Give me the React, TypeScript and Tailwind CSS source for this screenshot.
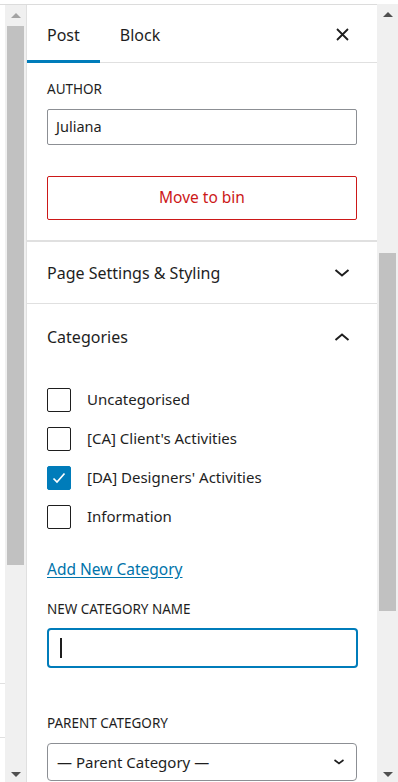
import React from "react";

const font = { fontFamily: '"Noto Sans", "Open Sans", sans-serif' };

function ChevronDown() {
  return (
    <svg width="16" height="10" viewBox="0 0 16 10" className="block">
      <polyline points="1.5,2 8,7.5 14.5,2" fill="none" stroke="#1e1e1e" strokeWidth="2" />
    </svg>
  );
}
function ChevronUp() {
  return (
    <svg width="16" height="10" viewBox="0 0 16 10" className="block">
      <polyline points="1.5,8 8,2.5 14.5,8" fill="none" stroke="#1e1e1e" strokeWidth="2" />
    </svg>
  );
}

function Checkbox({ checked, label }: { checked?: boolean; label: string }) {
  return (
    <div className="flex items-center h-[39px] gap-4">
      <div
        className={
          checked
            ? "w-6 h-6 rounded-[2px] bg-[#007cba] border border-[#007cba] flex items-center justify-center"
            : "w-6 h-6 rounded-[2px] border border-[#1e1e1e] bg-white"
        }
      >
        {checked && (
          <svg width="18" height="18" viewBox="0 0 18 18">
            <polyline points="3.5,9.5 7,13 14.5,4.5" fill="none" stroke="#fff" strokeWidth="1.7" />
          </svg>
        )}
      </div>
      <span className="text-[15px] text-[#1e1e1e]">{label}</span>
    </div>
  );
}

export default function App() {
  return (
    <div className="w-[398px] h-[782px] bg-white flex overflow-hidden" style={font}>
      <div className="flex-1 flex flex-col pt-[4px]">
        <div className="flex-1 flex border-t border-[#dcdcdc] min-h-0">
          {/* left strip */}
          <div className="w-[5px] flex flex-col">
            <div className="h-[678px]" />
            <div className="h-[55px] border-t border-b border-[#e0e0e0]" />
          </div>
          <div className="w-[21px] bg-[#f0f0f0] flex flex-col items-center relative">
            <div className="h-[21px] flex items-center justify-center">
              <div className="w-0 h-0 border-l-[5px] border-r-[5px] border-b-[5px] border-l-transparent border-r-transparent border-b-[#a3a3a3]" />
            </div>
            <div className="w-[17px] h-[539px] bg-[#c1c1c1]" />
            <div className="flex-1" />
            <div className="h-[16px] flex items-center justify-center">
              <div className="w-0 h-0 border-l-[5px] border-r-[5px] border-t-[5px] border-l-transparent border-r-transparent border-t-[#505050]" />
            </div>
          </div>
          {/* panel */}
          <div className="w-[351px] border-l border-[#e0e0e0] flex flex-col text-[#1e1e1e]">
            <div className="h-[58px] flex border-b border-[#e0e0e0] items-stretch">
              <div className="px-5 flex items-center text-[16px] border-b-[3px] border-[#007cba] pt-[5px] -mb-px">Post</div>
              <div className="px-5 flex items-center text-[16px] pt-[2px]">Block</div>
              <div className="flex-1" />
              <div className="w-[58px] flex items-center justify-center pr-[12px] pt-[2px]">
                <svg width="13" height="13" viewBox="0 0 13 13">
                  <path d="M1 1L12 12M12 1L1 12" stroke="#1e1e1e" strokeWidth="1.8" />
                </svg>
              </div>
            </div>
            <div className="px-5 pt-[16px] pb-[20px] border-b-2 border-[#e0e0e0]">
              <div className="text-[13.5px] leading-[20px] uppercase">Author</div>
              <div className="mt-[10px] h-[36px] border border-[#8c8f94] rounded-[2px] flex items-center px-2 text-[14.5px]">
                Juliana
              </div>
              <div className="mt-[31px] h-[44px] border-[1.5px] border-[#cc1818] rounded-[2px] flex items-center justify-center text-[15.5px] text-[#cc1818]">
                Move to bin
              </div>
            </div>
            <div className="h-[62px] px-5 flex items-center justify-between border-b border-[#e0e0e0]">
              <span className="text-[16px]">Page Settings &amp; Styling</span>
              <div className="mr-[7px]"><ChevronDown /></div>
            </div>
            <div className="px-5">
              <div className="h-[65px] flex items-center justify-between">
                <span className="text-[16px]">Categories</span>
                <div className="mr-[7px]"><ChevronUp /></div>
              </div>
              <div className="mt-[11px]">
                <Checkbox label="Uncategorised" />
                <Checkbox label="[CA] Client's Activities" />
                <Checkbox checked label="[DA] Designers' Activities" />
                <Checkbox label="Information" />
              </div>
              <div className="mt-[23px] text-[15.5px] text-[#0073aa] underline underline-offset-2 leading-[20px]">
                Add New Category
              </div>
              <div className="mt-[20px] text-[13.5px] leading-[20px] uppercase">New Category Name</div>
              <div className="mt-[9px] h-[40px] w-[311px] border-2 border-[#007cba] rounded-[4px] flex items-center pl-[11px]">
                <div className="w-[2px] h-[20px] bg-[#1e1e1e]" />
              </div>
              <div className="mt-[45px] text-[13.5px] leading-[20px] uppercase">Parent Category</div>
              <div className="mt-[10px] h-[38px] border border-[#8c8f94] rounded-[4px] flex items-center justify-between pl-[9px] pr-[11px] text-[15px]">
                <span>— Parent Category —</span>
                <svg width="12" height="8" viewBox="0 0 12 8">
                  <polyline points="1.5,2 6,5.5 10.5,2" fill="none" stroke="#1e1e1e" strokeWidth="1.6" />
                </svg>
              </div>
            </div>
          </div>
        </div>
      </div>
      {/* right scrollbar */}
      <div className="w-[21px] mt-[4px] bg-[#f0f0f0] flex flex-col items-center">
        <div className="h-[21px] flex items-center justify-center">
          <div className="w-0 h-0 border-l-[5px] border-r-[5px] border-b-[5px] border-l-transparent border-r-transparent border-b-[#505050]" />
        </div>
        <div className="h-[228px]" />
        <div className="w-[17px] h-[358px] bg-[#c1c1c1]" />
        <div className="flex-1" />
        <div className="h-[16px] flex items-center justify-center">
          <div className="w-0 h-0 border-l-[5px] border-r-[5px] border-t-[5px] border-l-transparent border-r-transparent border-t-[#505050]" />
        </div>
      </div>
    </div>
  );
}
